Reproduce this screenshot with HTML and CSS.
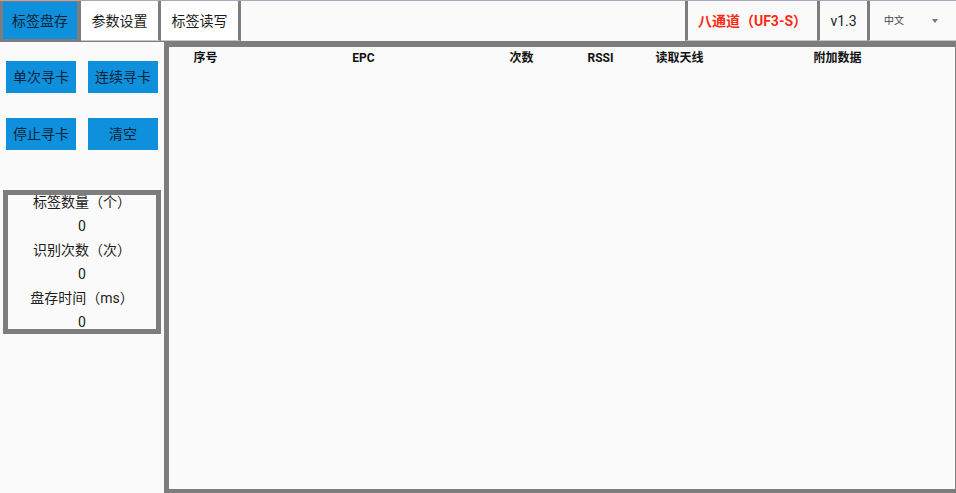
FILE: index.html
```html
<!DOCTYPE html>
<html lang="zh-CN">
<head>
<meta charset="utf-8">
<title>标签盘存</title>
<link rel="stylesheet" href="styles.css">
</head>
<body>
<header class="topbar">
  <nav class="tabs">
    <button class="tab tab-active" type="button">标签盘存</button>
    <button class="tab" type="button">参数设置</button>
    <button class="tab" type="button">标签读写</button>
  </nav>
  <div class="info model">八通道（UF3-S）</div>
  <div class="info version">v1.3</div>
  <div class="info language">
    <select class="language-select" aria-label="语言">
      <option>中文</option>
      <option>English</option>
    </select>
    <svg class="arrow" viewBox="0 0 6 4" aria-hidden="true"><path d="M0 0h6L3 4z"/></svg>
  </div>
</header>
<div class="workspace">
  <aside class="sidebar">
    <div class="actions">
      <button class="action" type="button">单次寻卡</button>
      <button class="action" type="button">连续寻卡</button>
      <button class="action" type="button">停止寻卡</button>
      <button class="action" type="button">清空</button>
    </div>
    <dl class="stats">
      <dt>标签数量（个）</dt><dd>0</dd>
      <dt>识别次数（次）</dt><dd>0</dd>
      <dt>盘存时间（ms）</dt><dd>0</dd>
    </dl>
  </aside>
  <main class="results">
    <table class="tags">
      <thead>
        <tr>
          <th class="narrow">序号</th>
          <th class="wide">EPC</th>
          <th class="narrow">次数</th>
          <th class="narrow">RSSI</th>
          <th class="narrow">读取天线</th>
          <th class="wide">附加数据</th>
        </tr>
      </thead>
      <tbody></tbody>
    </table>
  </main>
</div>
</body>
</html>
```
FILE: styles.css
```css
* {
  box-sizing: border-box;
}

body {
  margin: 0;
  min-height: 100vh;
  display: flex;
  flex-direction: column;
  background: #fafafa;
  color: #1c1c1c;
  font: 14px/20px Roboto, "Noto Sans CJK SC", sans-serif;
}

button,
select {
  font: inherit;
  color: inherit;
  border: 0;
  border-radius: 0;
  margin: 0;
  padding: 0;
}

.topbar {
  display: flex;
  height: 42px;
  border-top: 1px solid #aaa8bd;
  border-bottom: 1px solid #7d7d7d;
}

.tabs {
  display: flex;
  flex: 1;
}

.tab {
  width: 80px;
  background: #fff;
  border-right: 3px solid #7d7d7d;
  border-bottom: 1px solid #c6c9c8;
}

.tab-active {
  width: 81px;
  background: #0f90dc;
  color: #0b2434;
  border: 3px solid #7d7d7d;
  border-top-width: 1px;
  border-bottom-width: 2px;
  border-right-width: 4px;
}

.info {
  display: flex;
  align-items: center;
  justify-content: center;
  border-left: 3px solid #7d7d7d;
  border-bottom: 1px solid #c6c9c8;
}

.model {
  width: 132px;
  color: #fa2a14;
  font-weight: 700;
}

.version {
  width: 50px;
}

.language {
  width: 89px;
  position: relative;
}

.language-select {
  appearance: none;
  width: 100%;
  height: 100%;
  padding-left: 14px;
  background: transparent;
  color: #444;
  font-size: 10px;
}

.arrow {
  position: absolute;
  right: 18px;
  top: 18px;
  width: 6px;
  height: 4px;
  fill: #757575;
  pointer-events: none;
}

.workspace {
  display: flex;
  flex: 1;
}

.sidebar {
  width: 164px;
  padding: 19px 3px 0;
}

.actions {
  display: grid;
  grid-template-columns: 1fr 1fr;
  gap: 25px 12px;
  padding: 0 3px;
}

.action {
  height: 32px;
  background: #0f90dc;
  color: #0b2434;
}

.stats {
  margin: 40px 0 0;
  outline: 5px solid #7d7d7d;
  outline-offset: -5px;
  text-align: center;
  line-height: 24px;
}

.stats dd {
  margin: 0;
}

.results {
  flex: 1;
  border: 5px solid #7d7d7d;
  border-right-width: 1px;
  border-bottom-width: 4px;
}

/* The column grid runs under the frame on both sides. */
.tags {
  width: calc(100% + 4px);
  margin: 0 -1px 0 -3px;
  table-layout: fixed;
  border-collapse: collapse;
  color: #111;
  font-size: 12px;
  line-height: 22px;
}

.tags th {
  padding: 0;
  font-weight: 700;
}

.narrow {
  width: 10%;
}

.wide {
  width: 30%;
}
```
